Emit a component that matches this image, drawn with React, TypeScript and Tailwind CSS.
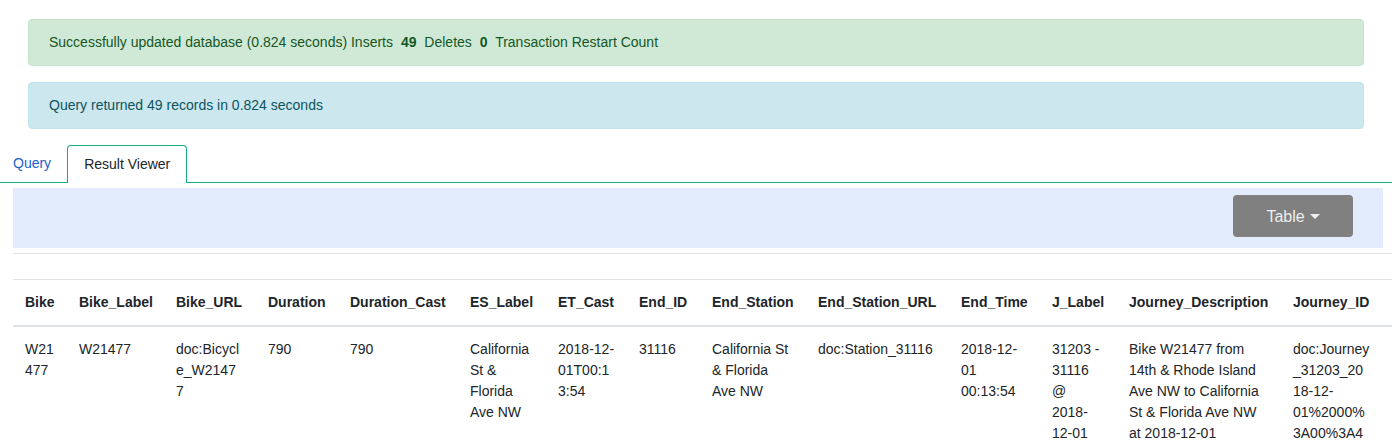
const columns: { name: string; width: string }[] = [
  { name: "Bike", width: "w-[54px]" },
  { name: "Bike_Label", width: "w-[97px]" },
  { name: "Bike_URL", width: "w-[92px]" },
  { name: "Duration", width: "w-[82px]" },
  { name: "Duration_Cast", width: "w-[120px]" },
  { name: "ES_Label", width: "w-[88px]" },
  { name: "ET_Cast", width: "w-[81px]" },
  { name: "End_ID", width: "w-[73px]" },
  { name: "End_Station", width: "w-[106px]" },
  { name: "End_Station_URL", width: "w-[143px]" },
  { name: "End_Time", width: "w-[91px]" },
  { name: "J_Label", width: "w-[77px]" },
  { name: "Journey_Description", width: "w-[164px]" },
  { name: "Journey_ID", width: "w-[101px]" },
  { name: "Start_ID", width: "w-[80px]" },
  { name: "Start_Station", width: "w-[110px]" },
];

const row = [
  "W21477",
  "W21477",
  "doc:Bicycle_W21477",
  "790",
  "790",
  "California St & Florida Ave NW",
  "2018-12-01T00:13:54",
  "31116",
  "California St & Florida Ave NW",
  "doc:Station_31116",
  "2018-12-01 00:13:54",
  "31203 - 31116 @ 2018-12-01 00:00:44",
  "Bike W21477 from 14th & Rhode Island Ave NW to California St & Florida Ave NW at 2018-12-01 00:00:44",
  "doc:Journey_31203_2018-12-01%2000%3A00%3A44",
  "31203",
  "14th & Rhode Island Ave NW",
];

export default function App() {
  return (
    <div className="w-[1392px] h-[444px] overflow-hidden bg-white text-[14px] leading-[21px] text-[#212529] font-['Liberation_Sans',Arial,sans-serif]">
      <div className="mx-[28px] mt-[19px]">
        <div className="mb-4 rounded border border-[#c3e6cb] bg-[#d0e9d7] px-5 py-3 text-[#155724]">
          Successfully updated database (0.824 seconds) Inserts{" "}
          <b className="px-1">49</b> Deletes <b className="px-1">0</b>{" "}
          Transaction Restart Count
        </div>
        <div className="mb-4 rounded border border-[#bee5eb] bg-[#cce7ee] px-5 py-3 text-[#0c5460]">
          Query returned 49 records in 0.824 seconds
        </div>
      </div>

      <div className="flex items-end border-b border-[#13ae7f]">
        <a className="py-2 pl-[13px] pr-4 text-[#1a5fd0]">Query</a>
        <a className="-mb-px rounded-t border border-b-0 border-[#13ae7f] bg-white px-4 py-2 text-[#212529]">
          Result Viewer
        </a>
      </div>

      <div className="ml-[13px] mr-[9px] mt-[5px] flex h-[60px] items-start justify-end bg-[#e2ecfd] pr-[30px] pt-[7px]">
        <button className="flex h-[42px] w-[120px] items-center justify-center rounded bg-[#808080] text-[16px] text-[#eeeeee]">
          Table
          <span className="ml-[5px] inline-block h-0 w-0 border-x-[5px] border-t-[5px] border-x-transparent border-t-[#eeeeee]" />
        </button>
      </div>

      <div className="ml-[13px] mt-[5px] border-t border-[#dee2e6]" />

      <table className="ml-[13px] mt-[25px] w-[1559px] table-fixed border-collapse">
        <thead>
          <tr>
            {columns.map((c) => (
              <th
                key={c.name}
                className={`${c.width} whitespace-nowrap border-t border-b-2 border-[#dee2e6] p-3 text-left align-bottom font-bold`}
              >
                {c.name}
              </th>
            ))}
          </tr>
        </thead>
        <tbody>
          <tr>
            {row.map((v, i) => (
              <td
                key={i}
                className={`border-t border-[#dee2e6] py-3 pl-3 align-top [overflow-wrap:anywhere] ${
                  i === 2 ? "pr-[14px]" : "pr-3"
                }`}
              >
                {v}
              </td>
            ))}
          </tr>
        </tbody>
      </table>
    </div>
  );
}
